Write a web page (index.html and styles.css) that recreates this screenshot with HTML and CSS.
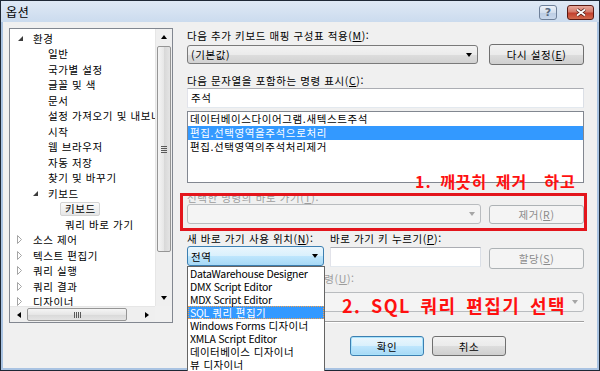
FILE: index.html
```html
<!DOCTYPE html>
<html lang="ko">
<head>
  <meta charset="UTF-8" />
  <title>옵션</title>
  <link rel="stylesheet" href="styles.css">
</head>
<body>
  <div class="window">
    <div class="titlebar">
      <span class="title">옵션</span>
      <div class="caption-buttons">
        <div class="cap-btn cap-help">?</div>
        <div class="cap-btn cap-close">
          <svg width="12" height="9" viewBox="0 0 12 9"><path d="M2 1.5L10 7.5M10 1.5L2 7.5" stroke="#4a1a14" stroke-width="3.4"/><path d="M2 1.5L10 7.5M10 1.5L2 7.5" stroke="#fff" stroke-width="1.8"/></svg>
        </div>
      </div>
    </div>

    <div class="client">
      <div class="tree">
        <div class="tree-list">
          <div class="node lv0"><span class="tw"><svg width="7" height="7"><path d="M6 1V6H1Z" fill="#3c3c3c"/></svg></span>환경</div>
          <div class="node lv1">일반</div>
          <div class="node lv1">국가별 설정</div>
          <div class="node lv1">글꼴 및 색</div>
          <div class="node lv1">문서</div>
          <div class="node lv1">설정 가져오기 및 내보내기</div>
          <div class="node lv1">시작</div>
          <div class="node lv1">웹 브라우저</div>
          <div class="node lv1">자동 저장</div>
          <div class="node lv1">찾기 및 바꾸기</div>
          <div class="node lv1b"><span class="tw"><svg width="7" height="7"><path d="M6 1V6H1Z" fill="#3c3c3c"/></svg></span>키보드</div>
          <div class="node lv2s"><span class="sel">키보드</span></div>
          <div class="node lv2">쿼리 바로 가기</div>
          <div class="node lv0"><span class="tw"><svg width="6" height="9"><path d="M0.5 0.5L4.5 4.5L0.5 8.5Z" fill="#fff" stroke="#a5a5a5"/></svg></span>소스 제어</div>
          <div class="node lv0"><span class="tw"><svg width="6" height="9"><path d="M0.5 0.5L4.5 4.5L0.5 8.5Z" fill="#fff" stroke="#a5a5a5"/></svg></span>텍스트 편집기</div>
          <div class="node lv0"><span class="tw"><svg width="6" height="9"><path d="M0.5 0.5L4.5 4.5L0.5 8.5Z" fill="#fff" stroke="#a5a5a5"/></svg></span>쿼리 실행</div>
          <div class="node lv0"><span class="tw"><svg width="6" height="9"><path d="M0.5 0.5L4.5 4.5L0.5 8.5Z" fill="#fff" stroke="#a5a5a5"/></svg></span>쿼리 결과</div>
          <div class="node lv0 last"><span class="tw"><svg width="6" height="9"><path d="M0.5 0.5L4.5 4.5L0.5 8.5Z" fill="#fff" stroke="#a5a5a5"/></svg></span>디자이너</div>
        </div>
        <div class="vscroll">
          <div class="sb-btn"><span class="arr-up"></span></div>
          <div class="thumb-v"><span class="grip-v"></span></div>
          <div class="sb-space"></div>
          <div class="sb-btn"><span class="arr-down"></span></div>
        </div>
        <div class="hscroll">
          <div class="sb-btn"><span class="arr-left"></span></div>
          <div class="thumb-h"><span class="grip-h"></span></div>
          <div class="sb-space"></div>
          <div class="sb-btn"><span class="arr-right"></span></div>
        </div>
        <div class="corner"></div>
      </div>

      <div class="pane">
        <div class="label l1">다음 추가 키보드 매핑 구성표 적용(<u>M</u>):</div>
        <div class="row row1">
          <div class="combo ro w-scheme">(기본값)<span class="arr-down"></span></div>
          <div class="btn w-btn">다시 설정(<u>E</u>)</div>
        </div>

        <div class="label l2">다음 문자열을 포함하는 명령 표시(<u>C</u>):</div>
        <div class="textbox full">주석</div>
        <div class="listbox">
          <div class="item">데이터베이스다이어그램.새텍스트주석</div>
          <div class="item selected">편집.선택영역을주석으로처리</div>
          <div class="item">편집.선택영역의주석처리제거</div>
        </div>

        <div class="label l3 disabled">선택한 명령의 바로 가기(<u>T</u>):</div>
        <div class="row row2">
          <div class="combo off w-current"><span class="arr-down"></span></div>
          <div class="btn off w-btn">제거(<u>R</u>)</div>
        </div>

        <div class="row l4">
          <div class="label col-a">새 바로 가기 사용 위치(<u>N</u>):</div>
          <div class="label">바로 가기 키 누르기(<u>P</u>):</div>
        </div>
        <div class="row row3">
          <div class="combo hot w-scope">전역<span class="arr-down"></span></div>
          <div class="textbox w-keys"></div>
          <div class="btn off w-btn btn-assign">할당(<u>S</u>)</div>
        </div>

        <div class="label l5 disabled">현재 바로 가기를 사용하는 명령(<u>U</u>):</div>
        <div class="combo off full c5"><span class="arr-down"></span></div>
        <div class="sep"></div>

        <div class="row actions">
          <div class="btn default w-ok">확인</div>
          <div class="btn w-ok">취소</div>
        </div>
      </div>
    </div>
  </div>

  <div class="dropdown">
    <div class="opt"><span class="en">DataWarehouse Designer</span></div>
    <div class="opt"><span class="en">DMX Script Editor</span></div>
    <div class="opt"><span class="en">MDX Script Editor</span></div>
    <div class="opt selected"><span class="en">SQL</span> 쿼리 편집기</div>
    <div class="opt"><span class="en">Windows Forms</span> 디자이너</div>
    <div class="opt"><span class="en">XMLA Script Editor</span></div>
    <div class="opt">데이터베이스 디자이너</div>
    <div class="opt">뷰 디자이너</div>
  </div>

  <div class="mark-box"></div>
  <div class="mark mark-1">1. 깨끗히 제거&nbsp; 하고</div>
  <div class="mark mark-2">2. SQL 쿼리 편집기 선택</div>
</body>
</html>
```

FILE: styles.css
```css
* {
  box-sizing: border-box;
}

body {
  margin: 0;
  width: 600px;
  height: 371px;
  overflow: hidden;
  font-family: "Noto Sans CJK KR", "Noto Sans", sans-serif;
  font-size: 10.5px;
  letter-spacing: 0.6px;
  color: #000;
  background: #fff;
}

u {
  text-decoration: underline;
  text-underline-offset: 1px;
}

/* window frame */
.window {
  width: 600px;
  height: 371px;
  border: 1px solid #1e2835;
  background: #a9c3e2;
  padding: 0 2px 2px 2px;
  display: flex;
  flex-direction: column;
}

.titlebar {
  height: 21px;
  flex: none;
  display: flex;
  align-items: flex-start;
  justify-content: space-between;
  padding-left: 3px;
  margin: 0 -2px;
  padding-right: 5px;
  background: linear-gradient(#dfe9f5, #cbdbee);
}

.title {
  font-size: 12px;
  line-height: 21px;
  padding-left: 2px;
}

.caption-buttons {
  display: flex;
  gap: 10px;
  margin-top: 4px;
}

.cap-btn {
  height: 15px;
  border-radius: 3px;
  display: flex;
  align-items: center;
  justify-content: center;
}

.cap-help {
  width: 18px;
  border: 1px solid #6f819a;
  background: linear-gradient(#edf2f9, #d3dfee 50%, #bccde4 51%, #c9d8ec);
  color: #56677d;
  font-family: "DejaVu Sans", sans-serif;
  font-weight: bold;
  font-size: 11px;
  letter-spacing: 0;
}

.cap-close {
  width: 27px;
  border: 1px solid #5a1a13;
  background: linear-gradient(#e9a99c, #d47a6a 45%, #c2402e 55%, #d26a4d);
}

.client {
  flex: 1;
  background: #f0f0f0;
  display: flex;
  align-items: flex-start;
  padding: 6px 0 0 6px;
}

/* tree */
.tree {
  width: 164px;
  height: 295px;
  flex: none;
  border: 1px solid #828790;
  background: #fff;
  display: grid;
  grid-template-columns: 145px 17px;
  grid-template-rows: 277px 16px;
}

.tree-list {
  overflow: hidden;
  white-space: nowrap;
  padding-top: 1.5px;
}

.node {
  height: 15.5px;
  display: flex;
  align-items: center;
}

.node.last {
  height: 12.5px;
  margin-top: 1px;
}

.tw {
  width: 8px;
  margin-right: 8px;
  display: flex;
  align-items: center;
}

.lv0 { padding-left: 7px; }
.lv1 { padding-left: 38px; }
.lv1b { padding-left: 22px; }
.lv2 { padding-left: 55px; }
.lv2s { padding-left: 50px; }

.sel {
  height: 14px;
  line-height: 12px;
  padding: 0 3px 0 4px;
  border: 1px solid #d3d3d3;
  border-radius: 2px;
  background: linear-gradient(#fbfbfb, #e6e6e6);
}

/* scrollbars */
.vscroll,
.hscroll {
  background: #efefef;
  display: flex;
}

.vscroll {
  flex-direction: column;
  border-left: 1px solid #e6e6e6;
}

.hscroll {
  border-top: 1px solid #e6e6e6;
}

.sb-btn {
  width: 16px;
  height: 16px;
  flex: none;
  display: flex;
  align-items: center;
  justify-content: center;
}

.hscroll .sb-btn {
  width: 17px;
  height: 15px;
}

.sb-space {
  flex: 1;
}

.arr-up,
.arr-down {
  width: 0;
  height: 0;
  border-left: 3.5px solid transparent;
  border-right: 3.5px solid transparent;
}

.arr-up { border-bottom: 4px solid #000; }
.arr-down { border-top: 4px solid #000; }

.arr-left,
.arr-right {
  width: 0;
  height: 0;
  border-top: 3.5px solid transparent;
  border-bottom: 3.5px solid transparent;
}

.arr-left { border-right: 4px solid #000; }
.arr-right { border-left: 4px solid #000; }

.thumb-v {
  height: 206px;
  margin: 1px 1px 0 1px;
  border: 1px solid #959595;
  border-radius: 2px;
  background: linear-gradient(to right, #f5f5f5, #e6e6e6 50%, #d8d8d8 51%, #e4e4e4);
  display: flex;
  align-items: center;
  justify-content: center;
}

.thumb-h {
  width: 100px;
  margin: 1px 0 1px 0;
  border: 1px solid #959595;
  border-radius: 2px;
  background: linear-gradient(#f5f5f5, #e6e6e6 50%, #d8d8d8 51%, #e4e4e4);
  display: flex;
  align-items: center;
  justify-content: center;
}

.grip-v {
  width: 6px;
  height: 7px;
  background: repeating-linear-gradient(#5a5a5a 0 1px, transparent 1px 2px);
}

.grip-h {
  width: 7px;
  height: 6px;
  background: repeating-linear-gradient(to right, #5a5a5a 0 1px, transparent 1px 2px);
}

.corner {
  background: #f0f0f0;
}

/* right pane */
.pane {
  width: 397px;
  margin-left: 14px;
  display: flex;
  flex-direction: column;
}

.label {
  height: 13px;
  line-height: 13px;
  white-space: nowrap;
}

.disabled {
  color: #9c9c9c;
}

.row {
  display: flex;
  align-items: center;
}

.l1 { margin-top: 1px; }
.row1 { height: 21px; margin-top: 2px; justify-content: space-between; }
.l2 { margin-top: 9px; }
.l3 { margin-top: 8px; }
.row2 { height: 20px; justify-content: space-between; }
.l4 { margin-top: 8px; }
.col-a { width: 143px; }
.row3 { height: 23px; margin-top: 1px; align-items: flex-start; }
.l5 { margin-top: 3px; }
.c5 { margin-top: 7px; }

.combo {
  height: 19px;
  border-radius: 3px;
  display: flex;
  align-items: center;
  justify-content: space-between;
  padding: 0 5px 0 3px;
  line-height: 17px;
}

.combo.ro {
  border: 1px solid #7a7a7a;
  background: linear-gradient(#f3f3f3, #ebebeb 50%, #dddddd 51%, #d2d2d2);
}

.combo.off {
  height: 20px;
  border: 1px solid #b9bcbf;
  background: #f4f4f4;
  justify-content: flex-end;
}

.combo.off .arr-down {
  border-top-color: #a6a6a6;
}

.combo.hot {
  height: 20px;
  border: 1px solid #3c7fb1;
  background: linear-gradient(#eaf6fd, #d9f0fc 50%, #bee6fd 51%, #a7d9f5);
}

.w-scheme { width: 291px; }
.w-current { width: 294px; }
.w-scope { width: 137px; }
.full { width: 397px; }

.textbox {
  height: 20px;
  background: #fff;
  border: 1px solid #e3e9ef;
  border-top-color: #abadb3;
  border-left-color: #e2e3ea;
  border-right-color: #dbdfe6;
  padding-left: 3px;
  line-height: 18px;
  margin-top: 1px;
}

.w-keys {
  width: 151px;
  margin-left: 6px;
}

.listbox {
  height: 72px;
  margin-top: 3px;
  background: #fff;
  border: 1px solid #828790;
}

.item {
  height: 14px;
  line-height: 14px;
  padding-left: 2px;
}

.item.selected {
  background: #3399ff;
  color: #fff;
}

.btn {
  height: 21px;
  border: 1px solid #707070;
  border-radius: 3px;
  background: linear-gradient(#f2f2f2, #ebebeb 50%, #dddddd 51%, #cfcfcf);
  display: flex;
  align-items: center;
  justify-content: center;
}

.btn.off {
  height: 19px;
  border-color: #adb2b5;
  background: #f4f4f4;
  color: #8a8a8a;
}

.btn-assign {
  height: 21px !important;
  margin-left: auto;
  margin-top: 2px;
}

.w-btn { width: 95px; }
.w-ok { width: 74px; height: 20px; }

.btn.default {
  border-color: #3c7fb1;
  box-shadow: inset 0 0 0 1px #a8e2fb;
  background: linear-gradient(#eaf6fd, #d9f0fc 50%, #bee6fd 51%, #a7d9f5);
}

.sep {
  margin-top: 9px;
  height: 2px;
  border-top: 1px solid #a0a0a0;
  border-bottom: 1px solid #fff;
}

.actions {
  margin-top: 13px;
  padding-left: 163px;
  gap: 8px;
}

/* open drop-down of the scope combo */
.dropdown {
  position: absolute;
  left: 187px;
  top: 266px;
  width: 138px;
  height: 112px;
  border: 1px solid #646464;
  background: #fff;
}

.opt {
  height: 13px;
  line-height: 13px;
  padding-left: 2px;
  white-space: nowrap;
  letter-spacing: 0.4px;
}

.opt .en {
  letter-spacing: -0.25px;
}

.opt.selected {
  background: #3399ff;
  color: #fff;
  outline: 1px dotted #f5a04a;
  outline-offset: -1px;
}

/* red annotations */
.mark-box {
  position: absolute;
  left: 180px;
  top: 193px;
  width: 407px;
  height: 38px;
  border: 3px solid #e3151c;
}

.mark {
  position: absolute;
  color: #ff1010;
  font-weight: bold;
  white-space: nowrap;
}

.mark-1 {
  left: 415px;
  top: 172px;
  font-size: 16px;
  line-height: 18px;
  letter-spacing: 1px;
  word-spacing: 3px;
}

.mark-2 {
  left: 342px;
  top: 294px;
  font-size: 18px;
  line-height: 22px;
  letter-spacing: 1.5px;
  word-spacing: 3px;
}
```
